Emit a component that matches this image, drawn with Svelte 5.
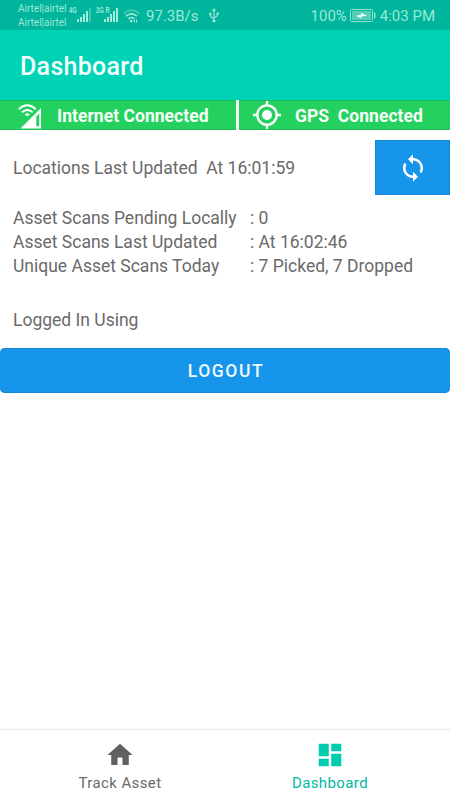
<script>
  const stats = [
    ['Asset Scans Pending Locally', ': 0'],
    ['Asset Scans Last Updated', ': At 16:02:46'],
    ['Unique Asset Scans Today', ': 7 Picked, 7 Dropped']
  ];
</script>

<div class="screen">
  <div class="status">
    <div class="carrier"><span>Airtel|airtel</span><span>Airtel|airtel</span></div>
    <div class="cell">
      <b>4G</b>
      <svg width="15" height="14" viewBox="0 0 15 14"><path d="M0 11h2v3H0zM3 9h2v5H3zM6 6h2v8H6zM9 3h2v11H9z" fill="#a3eadb"/><path d="M12 0h2v14h-2z" fill="#3bc6ae"/></svg>
    </div>
    <div class="cell">
      <b>2G R</b>
      <svg width="15" height="14" viewBox="0 0 15 14"><path d="M0 11h2v3H0zM3 9h2v5H3zM6 6h2v8H6zM9 3h2v11H9zM12 0h2v14h-2z" fill="#a3eadb"/></svg>
    </div>
    <svg width="17" height="14" viewBox="0 0 17 14" fill="none" stroke-width="1.6"><path d="M.7 4.6Q8.5-2.2 16.3 4.6" stroke="#4bcbb3"/><path d="M3 7.2Q8.5 2.5 14 7.2M5.4 9.8Q8.5 7.2 11.6 9.8" stroke="#a3eadb"/><circle cx="8.3" cy="12.1" r="1.4" fill="#a3eadb"/><path d="M11.5 13.5v-2.8M13.5 10.5v3" stroke="#a3eadb" stroke-width="1"/></svg>
    <span class="rate">97.3B/s</span>
    <svg class="usb" width="10" height="15" viewBox="0 0 10 15" fill="none" stroke="#a3eadb" stroke-width="1.1"><path d="M5 2v11M5 10.5Q1.3 9.8 1.3 6.5M5 9.5Q8.7 8.8 8.7 5.5"/><path d="M5 0l2 3H3zM.2 4.8h2.2v2.2H.2zM7.6 4.4h2.2v2.2H7.6zM3.6 12h2.8v2.3H3.6z" fill="#a3eadb" stroke="none"/></svg>
    <div class="right">
      <span>100%</span>
      <svg width="26" height="13" viewBox="0 0 26 13"><rect x=".5" y=".5" width="22" height="12" rx="1" fill="none" stroke="#8be3d0"/><rect x="2" y="2" width="19" height="9" fill="#55cdb8"/><path d="M24 3.5h1.5v6H24z" fill="#8be3d0"/><path d="M6 6.8l5-1 .2-2 5.8 3-5.6.6-.3 2z" fill="#dcfff7"/></svg>
      <span class="clock">4:03 PM</span>
    </div>
  </div>

  <header><h1>Dashboard</h1></header>

  <div class="connections">
    <div class="connection net">
      <svg width="24" height="26" viewBox="0 0 24 26"><path d="M.8 6.2Q9.3-1.6 17.8 6.2M3.9 9.4Q9.3 4.6 14.7 9.4" fill="none" stroke="#fff" stroke-width="1.9"/><path d="M6.7 11.2Q9.3 9.3 11.9 11.2L9.3 13.6z" fill="#fff"/><path fill="#fff" fill-rule="evenodd" d="M2.5 25.5L23 5v20.5zM18.3 13.5v9.8h2.9v-12.7z"/></svg>
      <span>Internet Connected</span>
    </div>
    <div class="connection gps">
      <svg width="28" height="28" viewBox="0 0 28 28"><circle cx="14" cy="14" r="9.7" fill="none" stroke="#fff" stroke-width="2.3"/><circle cx="14" cy="14" r="5" fill="#fff"/><path d="M14 0v4.5M14 23.5V28M0 14h4.5M23.5 14H28" stroke="#fff" stroke-width="2.4"/></svg>
      <span>GPS&nbsp; Connected</span>
    </div>
  </div>

  <main>
    <div class="locations">
      <span>Locations Last Updated&nbsp; At 16:01:59</span>
      <button class="sync" aria-label="Refresh locations">
        <svg width="30" height="30" viewBox="0 0 24 24" fill="#fff"><path d="M12 4V1L8 5l4 4V6c3.31 0 6 2.69 6 6 0 1.01-.25 1.97-.7 2.8l1.46 1.46C19.54 15.03 20 13.57 20 12c0-4.42-3.58-8-8-8zm0 14c-3.31 0-6-2.69-6-6 0-1.01.25-1.97.7-2.8L5.24 7.74C4.46 8.97 4 10.43 4 12c0 4.42 3.58 8 8 8v3l4-4-4-4v3z"/></svg>
      </button>
    </div>
    <div class="stats">
      {#each stats as [label, value]}
        <div class="stat"><span class="label">{label}</span><span>{value}</span></div>
      {/each}
    </div>
    <div class="user">Logged In Using</div>
    <button class="logout">LOGOUT</button>
  </main>

  <nav>
    <div class="tab">
      <svg width="30" height="30" viewBox="0 0 24 24" fill="#606060"><path d="M10 20v-6h4v6h5v-8h3L12 3 2 12h3v8z"/></svg>
      <span>Track Asset</span>
    </div>
    <div class="tab active">
      <svg width="30" height="30" viewBox="0 0 24 24" fill="#00cdb0"><path d="M3 13h8V3H3v10zm0 8h8v-6H3v6zm10 0h8V11h-8v10zm0-18v6h8V3h-8z"/></svg>
      <span>Dashboard</span>
    </div>
  </nav>
</div>

<style>
  :global(body) { margin: 0; background: #fff; }
  .screen {
    width: 450px; height: 800px; display: flex; flex-direction: column;
    background: #fff; color: #6a6a6a; overflow: hidden;
    font-family: Roboto, sans-serif; font-size: 17.5px; white-space: nowrap;
  }
  svg { display: block; flex: none; }
  button { border: 0; padding: 0; font-family: inherit; }
  .status {
    height: 30px; flex: none; display: flex; align-items: center; box-sizing: border-box;
    padding: 1px 15px 0 18px; background: #00b59b; color: #9ce8d8; font-size: 15px;
  }
  .carrier { width: 51px; flex: none; display: flex; flex-direction: column; font-size: 10px; line-height: 13.5px; }
  .cell { width: 27px; flex: none; display: flex; align-items: flex-start; height: 15px; }
  .cell b { width: 8px; flex: none; font-family: "Liberation Sans", sans-serif; font-size: 9px; line-height: 9px; margin-top: -2px; transform: scaleX(.65); transform-origin: left; }
  .rate { width: 54px; flex: none; margin-left: 6px; }
  .usb { margin-left: 9px; }
  .right { margin-left: auto; display: flex; align-items: center; }
  .right svg { margin-left: 3px; }
  .clock { margin-left: 4px; }
  header { height: 70px; flex: none; display: flex; align-items: center; padding-left: 20px; background: #00d2b5; color: #f2fffc; }
  h1 { margin: 2px 0 0; font-size: 25px; font-weight: 500; letter-spacing: .3px; }
  .connections { height: 30px; flex: none; display: flex; background: #24d15e; color: #f4fff7; font-weight: 700; box-shadow: inset 0 1px #1cbd62, inset 0 -1px #20bd54; }
  .connection { display: flex; align-items: center; box-sizing: border-box; }
  .connection span { padding-top: 2px; letter-spacing: .03px; }
  .net { width: 239px; border-right: 3px solid #f2fff5; padding-left: 18px; gap: 15px; }
  .net svg { margin-top: 2px; }
  .gps { padding-left: 14px; gap: 14px; }
  main { flex: 1; display: flex; flex-direction: column; }
  .locations { display: flex; justify-content: space-between; align-items: center; margin-top: 10px; padding-left: 13px; height: 55px; }
  .sync { width: 75px; height: 55px; display: grid; place-items: center; background: #1695eb; box-shadow: inset 0 0 0 1px #1488d6; }
  .stats { margin: 11px 0 0 13px; }
  .stat { display: flex; height: 24px; line-height: 24px; }
  .label { width: 237px; }
  .user { margin: 30px 0 0 13px; line-height: 24px; }
  .logout { height: 45px; margin-top: 16px; border-radius: 5px; background: #1695eb; color: #effaff; font-size: 17.5px; font-weight: 500; letter-spacing: 1.6px; padding-left: 2px; box-shadow: inset 0 1px #1488d6, inset 0 -1px #1488d6; }
  nav { height: 70px; flex: none; display: flex; justify-content: center; border-top: 1px solid #ededed; box-shadow: 0 -1px 1px #f8f8f8; }
  .tab { width: 210px; display: flex; flex-direction: column; align-items: center; padding-top: 10px; box-sizing: border-box; font-size: 15px; letter-spacing: .4px; }
  .tab span { margin-top: 4px; line-height: 18px; }
  .active { color: #00b99f; }
</style>
